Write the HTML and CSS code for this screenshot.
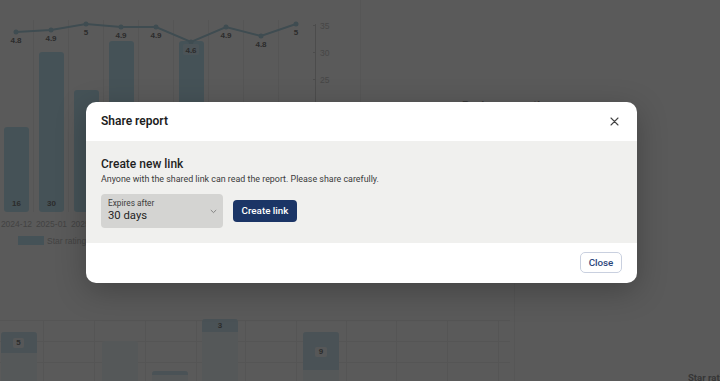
FILE: index.html
```html
<!DOCTYPE html>
<html lang="en">
<head>
<meta charset="utf-8">
<title>Share report</title>
<link rel="stylesheet" href="styles.css">
</head>
<body>
<div class="dashboard">
  <div class="row top">
    <section class="card chart-card">
      <svg class="chart" width="360" height="258" viewBox="0 0 360 258">
        <g class="vgrid">
          <line x1="33.5" y1="20" x2="33.5" y2="212"/><line x1="68.5" y1="20" x2="68.5" y2="212"/>
          <line x1="103.5" y1="20" x2="103.5" y2="212"/><line x1="138.5" y1="20" x2="138.5" y2="212"/>
          <line x1="173.5" y1="20" x2="173.5" y2="212"/><line x1="208.5" y1="20" x2="208.5" y2="212"/>
          <line x1="243.5" y1="20" x2="243.5" y2="212"/><line x1="278.5" y1="20" x2="278.5" y2="212"/>
        </g>
        <g class="bars">
          <rect x="4" y="127" width="25" height="85" rx="3"/>
          <rect x="39" y="52" width="25" height="160" rx="3"/>
          <rect x="74" y="90" width="25" height="122" rx="3"/>
          <rect x="109" y="41" width="25" height="171" rx="3"/>
          <rect x="144" y="112" width="25" height="100" rx="3"/>
          <rect x="179" y="41" width="25" height="171" rx="3"/>
          <rect x="214" y="120" width="25" height="92" rx="3"/>
          <rect x="249" y="130" width="25" height="82" rx="3"/>
          <rect x="284" y="115" width="25" height="97" rx="3"/>
        </g>
        <g class="barlabels">
          <text x="16.5" y="206">16</text><text x="51.5" y="206">30</text>
        </g>
        <polyline class="line" points="16,32 51,30 86,24 121,27 156,27 191,42 226,27 261,36 296,24"/>
        <g class="dots">
          <circle cx="16" cy="32" r="2.5"/><circle cx="51" cy="30" r="2.5"/><circle cx="86" cy="24" r="2.5"/>
          <circle cx="121" cy="27" r="2.5"/><circle cx="156" cy="27" r="2.5"/><circle cx="191" cy="42" r="2.5"/>
          <circle cx="226" cy="27" r="2.5"/><circle cx="261" cy="36" r="2.5"/><circle cx="296" cy="24" r="2.5"/>
        </g>
        <rect class="labelbox" x="183" y="44" width="16" height="11" rx="2"/>
        <g class="pointlabels">
          <text x="16" y="43">4.8</text><text x="51" y="41">4.9</text><text x="86" y="35">5</text>
          <text x="121" y="38">4.9</text><text x="156" y="38">4.9</text><text x="191" y="53">4.6</text>
          <text x="226" y="38">4.9</text><text x="261" y="47">4.8</text><text x="296" y="35">5</text>
        </g>
        <g class="axis">
          <line x1="315.5" y1="24" x2="315.5" y2="212"/>
          <line x1="313" y1="25.5" x2="316" y2="25.5"/><line x1="313" y1="52.5" x2="316" y2="52.5"/><line x1="313" y1="79.5" x2="316" y2="79.5"/>
        </g>
        <g class="axislabels">
          <text x="320" y="28.5">35</text><text x="320" y="55.5">30</text><text x="320" y="82.5">25</text>
        </g>
        <g class="xlabels">
          <text x="16.5" y="227">2024-12</text><text x="51.5" y="227">2025-01</text><text x="86.5" y="227">2025-02</text>
        </g>
        <rect class="swatch" x="18" y="236" width="26" height="9"/>
        <text class="legend" x="47" y="243.5">Star rating</text>
      </svg>
    </section>
    <section class="card side-card">
      <h3 class="card-title growth">Reviews growth</h3>
    </section>
  </div>
  <div class="row bottom">
    <section class="card chart-card wide">
      <svg class="chart" width="514" height="123" viewBox="0 0 514 123">
        <g class="hgrid">
          <line x1="0" y1="62.5" x2="510" y2="62.5"/><line x1="0" y1="83.5" x2="510" y2="83.5"/><line x1="0" y1="104.5" x2="510" y2="104.5"/>
        </g>
        <g class="vgrid">
          <line x1="43.5" y1="62" x2="43.5" y2="123"/><line x1="94.5" y1="62" x2="94.5" y2="123"/>
          <line x1="145.5" y1="62" x2="145.5" y2="123"/><line x1="196.5" y1="62" x2="196.5" y2="123"/>
          <line x1="245.5" y1="62" x2="245.5" y2="123"/><line x1="296.5" y1="62" x2="296.5" y2="123"/>
          <line x1="346.5" y1="62" x2="346.5" y2="123"/><line x1="396.5" y1="62" x2="396.5" y2="123"/>
          <line x1="447.5" y1="62" x2="447.5" y2="123"/><line x1="498.5" y1="62" x2="498.5" y2="123"/>
        </g>
        <g class="stack-low">
          <rect x="1" y="74" width="36" height="60" rx="3"/>
          <rect x="102" y="83" width="36" height="50" rx="3"/>
          <rect x="152" y="113" width="36" height="20" rx="3"/>
          <rect x="202" y="61" width="36" height="72" rx="3"/>
          <rect x="303" y="74" width="36" height="60" rx="3"/>
        </g>
        <g class="stack-high">
          <path d="M1 95 V77 a3 3 0 0 1 3 -3 h30 a3 3 0 0 1 3 3 V95 Z"/>
          <path d="M152 117 V116 a3 3 0 0 1 3 -3 h30 a3 3 0 0 1 3 3 V117 Z"/>
          <path d="M202 74 V64 a3 3 0 0 1 3 -3 h30 a3 3 0 0 1 3 3 V74 Z"/>
          <path d="M303 112 V77 a3 3 0 0 1 3 -3 h30 a3 3 0 0 1 3 3 V112 Z"/>
        </g>
        <g class="barlabels">
          <rect class="tag" x="13" y="80" width="11" height="10" rx="2"/>
          <rect class="tag" x="315" y="89" width="12" height="10" rx="2"/>
          <text x="18.5" y="87">5</text><text x="220" y="70">3</text><text x="321" y="96">9</text>
        </g>
      </svg>
    </section>
    <section class="card side-card narrow">
      <h3 class="card-title">Reviews Overview</h3>
      <div class="spacer"></div>
      <p class="star-label">Star rating</p>
    </section>
  </div>
</div>

<div class="backdrop">
  <div class="modal" role="dialog" aria-labelledby="share-title">
    <header class="modal-header">
      <h2 id="share-title" class="modal-title">Share report</h2>
      <button class="icon-btn" aria-label="Close">
        <svg width="9" height="9" viewBox="0 0 9 9"><path d="M1 1 L8 8 M8 1 L1 8" stroke="#444" stroke-width="1.1" stroke-linecap="round"/></svg>
      </button>
    </header>
    <div class="modal-body">
      <h3 class="section-title">Create new link</h3>
      <p class="section-desc">Anyone with the shared link can read the report. Please share carefully.</p>
      <div class="controls">
        <div class="select">
          <div class="select-text">
            <span class="select-label">Expires after</span>
            <span class="select-value">30 days</span>
          </div>
          <svg class="chevron" width="7" height="5" viewBox="0 0 7 5"><path d="M0.8 1 L3.5 3.6 L6.2 1" fill="none" stroke="#7a7a7a" stroke-width="0.9"/></svg>
        </div>
        <button class="btn-primary">Create link</button>
      </div>
    </div>
    <footer class="modal-footer">
      <button class="btn-secondary">Close</button>
    </footer>
  </div>
</div>
</body>
</html>
```

FILE: styles.css
```css
* { box-sizing: border-box; }
html, body { margin: 0; padding: 0; }
body {
  width: 720px;
  height: 381px;
  overflow: hidden;
  background: #ffffff;
  font-family: Roboto, "Liberation Sans", Arial, sans-serif;
  position: relative;
}

/* background dashboard */
.dashboard { display: flex; flex-direction: column; }
.row { display: flex; }
.row.top { height: 258px; }
.row.bottom { height: 123px; }
.card { background: #fff; }
.chart-card { width: 360px; flex: none; }
.chart-card.wide { width: 514px; }
.side-card { flex: 1; border-left: 1px solid #f3f3f3; display: flex; flex-direction: column; overflow: hidden; }
.side-card.narrow { padding: 10px 0 0 13px; }
.card-title { margin: 0; font-size: 11.5px; font-weight: 700; color: #9a9a9a; white-space: nowrap; }
.card-title.growth { margin: 98px 0 0 101px; }
.spacer { flex: 1; }
.star-label { margin: 0 0 -2px 160px; font-size: 9.5px; font-weight: 700; color: #9a9a9a; white-space: nowrap; }
.chart { display: block; }
.chart text { font-family: "Liberation Sans", Arial, sans-serif; }
.vgrid line, .hgrid line { stroke: #f1f1f1; stroke-width: 1; }
.bars rect { fill: #c3e8f7; }
.stack-low rect { fill: #f0f8fb; }
.stack-high path { fill: #d2e9f3; }
.tag { fill: #f4f7f8; }
.line { fill: none; stroke: #b2d6e4; stroke-width: 2; }
.dots circle { fill: #b2d6e4; }
.labelbox { fill: #d7eef8; }
.pointlabels text, .barlabels text { font-size: 8px; font-weight: 700; fill: #7d7d7d; text-anchor: middle; }
.axis line { stroke: #d8d8d8; }
.axislabels text { font-size: 8.5px; fill: #c8c8c8; }
.xlabels text { font-size: 8.5px; fill: #bdbdbd; text-anchor: middle; }
.swatch { fill: #c3e8f7; }
.legend { font-size: 8.5px; fill: #bdbdbd; }

/* modal */
.backdrop {
  position: absolute;
  inset: 0;
  background: rgba(0, 0, 0, 0.648);
  display: flex;
  align-items: center;
  justify-content: center;
  padding: 3px 0 0 3px;
}
.modal {
  width: 551px;
  background: #ffffff;
  border-radius: 10px;
  overflow: hidden;
  box-shadow: 0 8px 30px rgba(0, 0, 0, 0.25);
}
.modal-header {
  height: 39px;
  display: flex;
  align-items: center;
  justify-content: space-between;
  padding: 0 18px 0 15px;
}
.modal-title { margin: 0; font-size: 12px; font-weight: 600; color: #1d1d1d; }
.icon-btn { border: 0; background: none; padding: 0; width: 9px; height: 9px; display: flex; cursor: pointer; }
.modal-body {
  background: #f0f0ee;
  padding: 15px 15px 15px;
}
.section-title { margin: 0; font-size: 12px; font-weight: 500; color: #1f1f1f; line-height: 16px; }
.section-desc { margin: 0 0 8px; font-size: 8.9px; color: #3b3b3b; line-height: 14px; }
.controls { display: flex; align-items: center; gap: 10px; }
.select {
  width: 122px;
  height: 34px;
  background: #d4d4d2;
  border-radius: 4px;
  display: flex;
  align-items: center;
  justify-content: space-between;
  padding: 0 6px 0 7px;
}
.select-text { display: flex; flex-direction: column; }
.select-label { font-size: 8.3px; color: #3d3d3d; line-height: 11px; }
.select-value { font-size: 11.3px; color: #1f1f1f; line-height: 14px; }
.chevron { margin-top: 1px; }
.btn-primary {
  height: 22px;
  width: 64px;
  border: 0;
  border-radius: 4px;
  background: #1b3566;
  color: #ffffff;
  font-family: inherit;
  font-size: 9.8px;
  font-weight: 500;
  padding: 0;
}
.modal-footer {
  height: 40px;
  display: flex;
  align-items: center;
  justify-content: flex-end;
  padding: 0 15px;
}
.btn-secondary {
  width: 42px;
  height: 21px;
  border: 1px solid #c9d0df;
  border-radius: 5px;
  background: #ffffff;
  color: #2a457a;
  font-family: inherit;
  font-size: 9.8px;
  font-weight: 500;
  padding: 0;
}
```
